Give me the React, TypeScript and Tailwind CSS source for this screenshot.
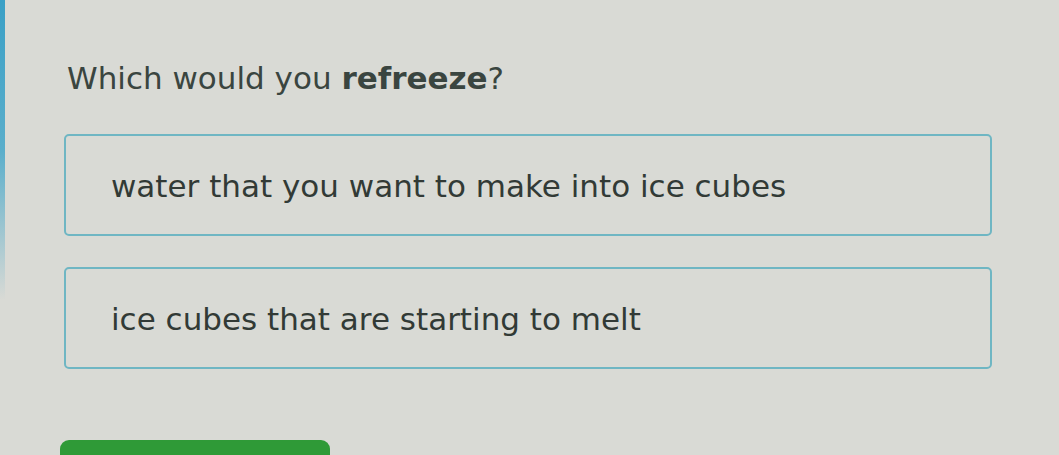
import React from 'react';

const choices = [
  'water that you want to make into ice cubes',
  'ice cubes that are starting to melt',
];

const App: React.FC = () => {
  return (
    <div
      className="relative h-[455px] w-[1059px] overflow-hidden bg-[#d9dad5] text-[#323a36]"
      style={{ fontFamily: '"DejaVu Sans", Verdana, sans-serif' }}
    >
      {/* left accent strip */}
      <div className="absolute left-0 top-0 h-[300px] w-[5px] bg-gradient-to-b from-[#3aa0c6] via-[#5aaecb] to-transparent" />

      <div className="flex w-[992px] flex-col pl-[64px] pt-[56px]">
        <h1 className="pl-[3px] text-[31px] leading-[44px] font-normal text-[#3a4540]">
          Which would you <span className="font-bold">refreeze</span>?
        </h1>

        <div className="mt-[34px] flex flex-col gap-[31px]">
          {choices.map(choice => (
            <div
              key={choice}
              className="flex h-[102px] items-center rounded-[5px] border-2 border-[#6fb6c3] pl-[45px] pt-[3px] text-[31px]"
            >
              {choice}
            </div>
          ))}
        </div>

        <div className="-ml-[4px] mt-[71px] h-[20px] w-[270px] rounded-t-[9px] bg-[#2f9a37]" />
      </div>
    </div>
  );
};

export default App;
